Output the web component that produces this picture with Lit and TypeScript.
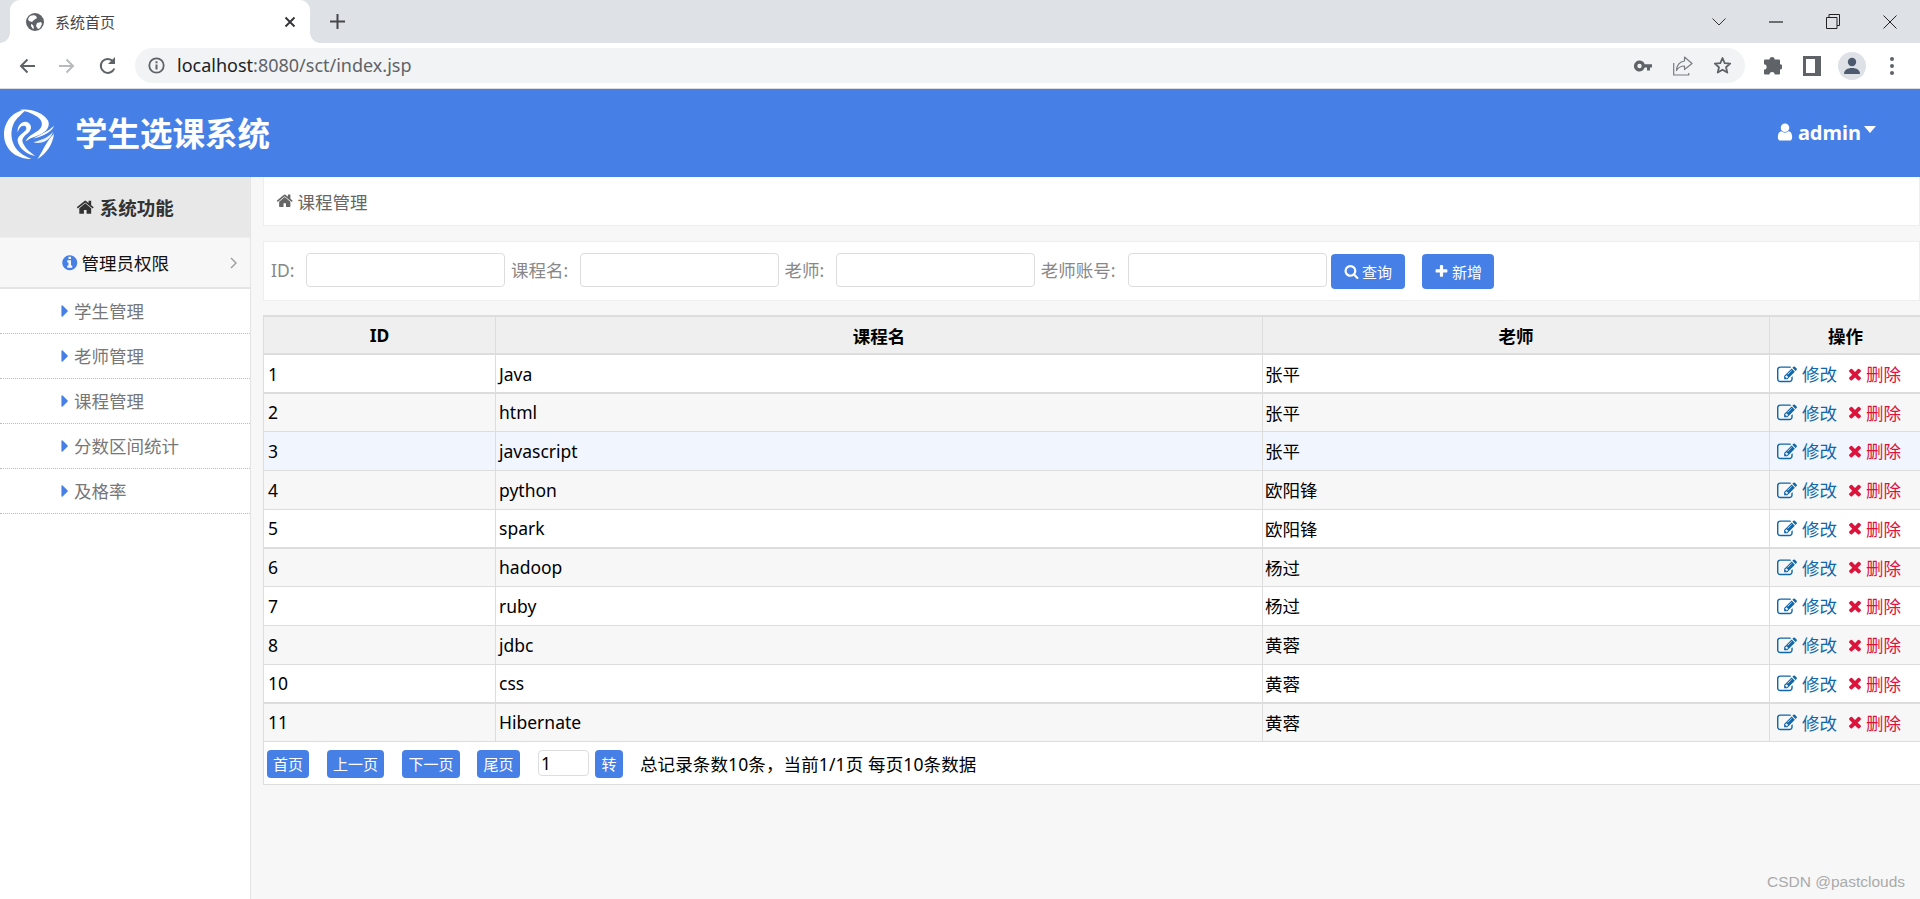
import { LitElement, html, css, svg } from "lit";
import { customElement } from "lit/decorators.js";

const P = {
  home: "M1472 992v480q0 26-19 45t-45 19h-384v-384h-256v384h-384q-26 0-45-19t-19-45v-480q0-1 .5-3t.5-3l575-474 575 474q1 2 1 6zm223-69l-62 74q-8 9-21 11h-3q-13 0-21-7l-692-577-692 577q-12 8-24 7-13-2-21-11l-62-74q-8-10-7-23.5t11-21.5l719-599q32-26 76-26t76 26l244 204v-195q0-14 9-23t23-9h192q14 0 23 9t9 23v408l219 182q10 8 11 21.5t-7 23.5z",
  user: "M1536 1399q0 109-62.5 187t-150.5 78h-854q-88 0-150.5-78t-62.5-187q0-85 8.5-160.5t31.5-152 58.5-131 94-89 134.5-34.5q131 128 313 128t313-128q76 0 134.5 34.5t94 89 58.5 131 31.5 152 8.5 160.5zm-256-887q0 159-112.5 271.5t-271.5 112.5-271.5-112.5-112.5-271.5 112.5-271.5 271.5-112.5 271.5 112.5 112.5 271.5z",
  info: "M1152 1376v-160q0-14-9-23t-23-9h-96v-512q0-14-9-23t-23-9h-320q-14 0-23 9t-9 23v160q0 14 9 23t23 9h96v320h-96q-14 0-23 9t-9 23v160q0 14 9 23t23 9h448q14 0 23-9t9-23zm-128-896v-160q0-14-9-23t-23-9h-192q-14 0-23 9t-9 23v160q0 14 9 23t23 9h192q14 0 23-9t9-23zm640 416q0 209-103 385.5t-279.5 279.5-385.5 103-385.5-103-279.5-279.5-103-385.5 103-385.5 279.5-279.5 385.5-103 385.5 103 279.5 279.5 103 385.5z",
  caret: "M1152 896q0 26-19 45l-448 448q-19 19-45 19t-45-19-19-45v-896q0-26 19-45t45-19 45 19l448 448q19 19 19 45z",
  search: "M1216 832q0-185-131.5-316.5t-316.5-131.5-316.5 131.5-131.5 316.5 131.5 316.5 316.5 131.5 316.5-131.5 131.5-316.5zm512 832q0 52-38 90t-90 38q-54 0-90-38l-343-342q-179 124-399 124-143 0-273.5-55.5t-225-150-150-225-55.5-273.5 55.5-273.5 150-225 225-150 273.5-55.5 273.5 55.5 225 150 150 225 55.5 273.5q0 220-124 399l343 343q37 37 37 90z",
  plus: "M1600 736v192q0 40-28 68t-68 28h-416v416q0 40-28 68t-68 28h-192q-40 0-68-28t-28-68v-416h-416q-40 0-68-28t-28-68v-192q0-40 28-68t68-28h416v-416q0-40 28-68t68-28h192q40 0 68 28t28 68v416h416q40 0 68 28t28 68z",
  times: "M1490 1322q0 40-28 68l-136 136q-28 28-68 28t-68-28l-294-294-294 294q-28 28-68 28t-68-28l-136-136q-28-28-28-68t28-68l294-294-294-294q-28-28-28-68t28-68l136-136q28-28 68-28t68 28l294 294 294-294q28-28 68-28t68 28l136 136q28 28 28 68t-28 68l-294 294 294 294q28 28 28 68z",
  edit: "M888 1184l116-116-152-152-116 116v56h96v96h56zm440-720q-16-16-33 1l-350 350q-17 17-1 33t33-1l350-350q17-17 1-33zm80 594v190q0 119-84.5 203.5t-203.5 84.5h-832q-119 0-203.5-84.5t-84.5-203.5v-832q0-119 84.5-203.5t203.5-84.5h832q63 0 117 25 15 7 18 23 3 17-9 29l-49 49q-14 14-32 8-23-6-45-6h-832q-66 0-113 47t-47 113v832q0 66 47 113t113 47h832q66 0 113-47t47-113v-126q0-13 9-22l64-64q15-15 35-7t20 29zm-96-738l288 288-672 672h-288v-288zm444 132l-92 92-288-288 92-92q28-28 68-28t68 28l152 152q28 28 28 68t-28 68z",
};

const fa = (d: string, extra = "") =>
  html`<svg class="fa ${extra}" viewBox="0 0 1792 1792"><path d=${d} fill="currentColor"></path></svg>`;

const ROWS: [string, string, string, number][] = [
  ["1", "Java", "张平", 39],
  ["2", "html", "张平", 38],
  ["3", "javascript", "张平", 39],
  ["4", "python", "欧阳锋", 39],
  ["5", "spark", "欧阳锋", 39],
  ["6", "hadoop", "杨过", 38],
  ["7", "ruby", "杨过", 39],
  ["8", "jdbc", "黄蓉", 39],
  ["10", "css", "黄蓉", 39],
  ["11", "Hibernate", "黄蓉", 38],
];
const THICK = [0, 4, 8];

const NAV = ["学生管理", "老师管理", "课程管理", "分数区间统计", "及格率"];

@customElement("app-root")
export class AppRoot extends LitElement {
  static styles = css`
    :host { display: flex; flex-direction: column; height: 899px; overflow: hidden; position: relative;
      background: #f7f7f7; font-family: "Noto Sans", "Noto Sans CJK SC", sans-serif; font-size: 17.5px; color: #000; }
    .fa { width: 1em; height: 1em; flex: none; display: block; }

    .tabstrip { height: 43px; background: #dee1e6; display: flex; align-items: stretch; padding-left: 10px; flex: none; }
    .tab { position: relative; width: 300px; background: #fff; border-radius: 10px 10px 0 0; display: flex; align-items: center;
      padding: 0 14px 0 16px; box-sizing: border-box; gap: 11px; font-size: 15px; color: #45474a; }
    .tab::before, .tab::after { content: ""; position: absolute; bottom: 0; width: 10px; height: 10px; }
    .tab::before { left: -10px; background: radial-gradient(circle at 0 0, #dee1e6 9.5px, #fff 10px); }
    .tab::after { right: -10px; background: radial-gradient(circle at 100% 0, #dee1e6 9.5px, #fff 10px); }
    .tab-title { flex: 1; }
    .plus { margin-left: 15px; width: 24px; display: flex; align-items: center; justify-content: center; }
    .winbtns { margin-left: auto; display: flex; align-items: center; padding-right: 1.5px; }
    .winbtn { width: 57px; height: 36px; display: flex; align-items: center; justify-content: center; }

    .toolbar { height: 45px; background: #fff; border-bottom: 1px solid #dadce0; display: flex; align-items: center; padding-left: 7px; flex: none; }
    .tbtn { width: 40px; height: 35px; display: flex; align-items: center; justify-content: center; flex: none; }
    .reload { padding-left: 1px; box-sizing: border-box; }
    .omni { margin-left: 8px; width: 1610px; height: 35px; border-radius: 18px; background: #f1f3f4; display: flex; align-items: center;
      padding-left: 13px; box-sizing: border-box; }
    .url { font-size: 18px; margin-left: 12px; color: #5f6368; flex: 1; line-height: 35px; }
    .url b { font-weight: 400; color: #202124; }
    .omni-end { display: flex; align-items: center; gap: 0; padding-right: 3px; }
    .oi { width: 39.5px; display: flex; justify-content: center; align-items: center; }
    .tools { margin-left: 7px; display: flex; }
    .avatar { width: 28px; height: 28px; border-radius: 50%; background: #dee1e6; display: flex; align-items: center; justify-content: center; }

    .header { height: 88px; background: #4680e6; color: #fff; display: flex; align-items: center; flex: none; padding: 0 44px 0 4px; }
    .logo { width: 51px; height: 51px; flex: none; margin-top: 2px; }
    .title { font-size: 32.5px; font-weight: 700; margin-left: 20px; font-family: "Noto Sans CJK SC", sans-serif; line-height: 1; margin-bottom: 2px; }
    .user { margin-left: auto; display: flex; align-items: center; font-size: 20px; font-weight: 700; gap: 3px; margin-bottom: 2px; }
    .user .fa { width: 20px; height: 20px; margin-left: -1px; }
    .caret { width: 0; height: 0; border-left: 6px solid transparent; border-right: 6px solid transparent; border-top: 7px solid #fff; margin-bottom: 6px; }

    .body { flex: 1; display: flex; min-height: 0; }
    .side { width: 251px; flex: none; background: #fff; border-right: 1px solid #e4e4e4; box-sizing: border-box; }
    .side-head { height: 60px; background: #e8e8e8; display: flex; align-items: center; justify-content: center; gap: 5px; font-size: 18.5px; font-weight: 700; color: #333; border-bottom: 1px solid #eee; box-sizing: content-box; }
    .side-group { height: 49px; background: #f7f7f7; border-bottom: 2px solid #e4e4e4; display: flex; align-items: center; padding: 0 12px 0 61px; gap: 3px; color: #111; box-sizing: content-box; }
    .side-group .info { color: #4680e6; }
    .side-group .lbl { flex: 1; }
    .nav { height: 44px; border-bottom: 1px dotted #bbb; display: flex; align-items: center; padding-left: 55px; color: #777; box-sizing: content-box; }
    .nav .fa { color: #4680e6; width: 20px; height: 20px; margin-right: -1px; }
    .nav span { margin-bottom: 2px; }

    .main { flex: 1; min-width: 0; padding-left: 12px; box-sizing: border-box; }
    .crumb { height: 49px; background: #fff; border: 1px solid #eee; border-top: 0; box-sizing: border-box; display: flex; align-items: center; padding-left: 12px; gap: 4px; color: #666; }
    .search { margin-top: 15px; height: 60px; background: #fff; border: 1px solid #eee; box-sizing: border-box; display: flex; align-items: center; padding: 0 0 3px 7px; color: #888; }
    .search input { height: 34px; width: 199px; box-sizing: border-box; border: 1px solid #ddd; border-radius: 4px; background: #fff; margin: 0 5.5px 0 12px; padding: 0; }
    .btn { background: #4680e6; color: #fff; border-radius: 4px; font-size: 15px; display: inline-flex; align-items: center; justify-content: center; gap: 3px; white-space: nowrap; box-sizing: border-box; }
    .search .btn { height: 35px; margin-top: 3px; }
    .search .fa { width: 15px; height: 15px; }

    table { margin-top: 14px; width: 1658px; table-layout: fixed; border-collapse: collapse; background: #fff; }
    th, td { border: 1px solid #ddd; padding: 0; box-sizing: border-box; }
    th { height: 38px; background: #efefef; font-weight: 700; text-align: center; border-width: 2px 1px; }
    td { padding-left: 4px; text-align: left; }
    td.name { padding-left: 3px; }
    td.nar { padding-left: 2px; }
    tr.alt td { background: #f7f7f7; }
    tr.hov td { background: #f1f5fd; }
    tr.thick td { border-bottom-width: 2px; }
    td.opcell { padding: 0; }
    .acts { display: flex; align-items: center; padding-left: 7px; }
    .e { color: #1267a8; display: flex; align-items: center; gap: 5px; }
    .e .fa { width: 20px; height: 20px; transform: translateY(1px); }
    .x { color: #dc143c; display: flex; align-items: center; gap: 2px; margin-left: 9px; }
    .x .fa { width: 18px; height: 18px; }

    .pager { height: 43px; width: 1658px; background: #fff; border: 1px solid #ddd; border-top: 0; box-sizing: border-box; display: flex; align-items: flex-start; padding: 8px 0 0 3px; }
    .pager .btn { height: 28px; flex: none; }
    .pager input { width: 51px; height: 26px; box-sizing: border-box; border: 1px solid #ddd; border-radius: 4px; margin: 0 6px 0 0; padding: 0 0 0 2px; font: inherit; color: #000; background: #fff; }
    .info-text { margin-left: 17px; line-height: 28px; white-space: nowrap; letter-spacing: 0.12px; }

    .mark { position: absolute; right: 15px; bottom: 8px; font: 15.5px "Liberation Sans", sans-serif; color: #aaa; }
  `;

  logo() {
    return html`<svg class="logo" viewBox="0 0 52 52" fill="#fff">
      <path d="M22 1C9 2 0 13 0 26c0 14 11 25 28 25-8-3-16-8-19-17-3-9-1-19 5-25 3-3 6-6 8-8z"></path>
      <path d="M16 1c10-2 24 2 29 11 3 8-5 14-13 16-4 1-7 3-10 5 3-6 9-8 13-11 5-4 5-10-1-14-6-4-12-6-18-7z"></path>
      <path d="M14 24c-1-8 6-13 11-10 4 3 3 8-1 11-4 3-7 6-4 11 3 6 8 9 12 12-8-1-17-8-18-15-1-5 5-8 8-11 2-3 0-5-2-5-3 0-5 3-6 7z"></path>
      <path d="M51 17c-2 7-13 11-21 13 7-4 15-7 21-13z"></path>
      <path d="M50 23c-3 5-10 8-20 11 3 1 8 1 12-1 4-2 7-6 8-10z" opacity=".9"></path>
      <path d="M51 25c-1 11-8 21-17 26 5-7 8-15 12-20 2-3 4-4 5-6z"></path>
    </svg>`;
  }

  chrome() {
    const stroke = (d: string, c = "#45474a", w = 2) => svg`<path d=${d} fill="none" stroke=${c} stroke-width=${w}></path>`;
    return html`
      <div class="tabstrip">
        <div class="tab">
          <svg width="18" height="18" viewBox="0 0 18 18"><circle cx="9" cy="9" r="9" fill="#5f6368"></circle><path d="M4 3c2-1 5-1 6 0l1 2-3 2-2 2-3-1-1-2zM11 10l4-1 1 2-2 4-2 1-2-3zM5 11l2 1 1 3-1 1-2-3z" fill="#fff"></path></svg>
          <span class="tab-title">系统首页</span>
          <svg width="12" height="12" viewBox="0 0 12 12">${stroke("M1.5 1.5l9 9M10.5 1.5l-9 9", "#303134", 1.8)}</svg>
        </div>
        <div class="plus"><svg width="15" height="15" viewBox="0 0 15 15">${stroke("M7.5 0v15M0 7.5h15", "#45474a", 2)}</svg></div>
        <div class="winbtns">
          <div class="winbtn"><svg width="14" height="8" viewBox="0 0 14 8">${stroke("M.5.5L7 7l6.5-6.5", "#333", 1)}</svg></div>
          <div class="winbtn"><svg width="14" height="2" viewBox="0 0 14 2">${stroke("M0 1h14", "#222", 1.2)}</svg></div>
          <div class="winbtn"><svg width="14" height="15" viewBox="0 0 14 15">${stroke("M.5 3.5h10.5v11H.5zM3 3.5V.5h10.5v11H11", "#222", 1)}</svg></div>
          <div class="winbtn"><svg width="14" height="14" viewBox="0 0 14 14">${stroke("M.5.5l13 13M13.5.5l-13 13", "#222", 1)}</svg></div>
        </div>
      </div>
      <div class="toolbar">
        <div class="tbtn"><svg width="16" height="16" viewBox="0 0 16 16">${stroke("M16 8H2M8.5 1.5L2 8l6.5 6.5", "#5f6368", 2)}</svg></div>
        <div class="tbtn"><svg width="16" height="16" viewBox="0 0 16 16">${stroke("M0 8h14M7.5 1.5L14 8l-6.5 6.5", "#b8babc", 2)}</svg></div>
        <div class="tbtn reload"><svg width="18" height="18" viewBox="0 0 18 18">${stroke("M15.3 11.5A7 7 0 1 1 14 4.2", "#5f6368", 2)}<path d="M16 0v7H9z" fill="#5f6368"></path></svg></div>
        <div class="omni">
          <svg width="17" height="17" viewBox="0 0 17 17"><circle cx="8.5" cy="8.5" r="7.2" fill="none" stroke="#5f6368" stroke-width="1.8"></circle><path d="M7.5 7.5h2v5h-2zM7.5 4.2h2v2h-2z" fill="#5f6368"></path></svg>
          <div class="url"><b>localhost</b>:8080/sct/index.jsp</div>
          <div class="omni-end">
            <div class="oi"><svg width="18" height="12" viewBox="0 0 18 12"><path fill-rule="evenodd" d="M5.5 0.5a5.5 5.5 0 0 1 5.2 3.7H18v3.4h-2v3h-3v-3h-2.300A5.500 5.500 0 1 1 5.500.5zm0 3.300a2.200 2.200 0 1 0 0 4.400 2.200 2.200 0 0 0 0-4.400z" fill="#5f6368"></path></svg></div>
            <div class="oi"><svg width="20" height="20" viewBox="0 0 20 20">${stroke("M.7 7v12h15v-2", "#7a7d80", 1.2)}<path d="M11.500 1l7.500 6.500-7.500 6v-3.500c-3 0-6 1-8 4.500 0-5 3-9 8-9.500z" fill="none" stroke="#7a7d80" stroke-width="1.200" stroke-linejoin="round"></path></svg></div>
            <div class="oi"><svg width="19" height="19" viewBox="0 0 19 19"><path d="M9.500 2l2.200 5.100 5.500.5-4.200 3.600 1.300 5.400-4.800-2.900-4.800 2.900 1.300-5.400L1.800 7.600l5.500-.5z" fill="none" stroke="#5f6368" stroke-width="1.800" stroke-linejoin="round"></path></svg></div>
          </div>
        </div>
        <div class="tools">
          <div class="tbtn"><svg width="19" height="19" viewBox="0 0 19 19"><path d="M6.500 3.500a2.600 2.600 0 0 1 5.200 0H16a1 1 0 0 1 1 1v3.700a2.600 2.600 0 0 1 0 5.200V17.500a1 1 0 0 1-1 1h-4.300a2.600 2.600 0 0 0-5.200 0H2a1 1 0 0 1-1-1v-4a2.600 2.600 0 0 0 0-5.200V4.500a1 1 0 0 1 1-1z" fill="#5f6368"></path></svg></div>
          <div class="tbtn"><svg width="18" height="20" viewBox="0 0 18 20"><path fill-rule="evenodd" d="M0 0h18v20H0zM3 3v14h9V3z" fill="#5f6368"></path></svg></div>
          <div class="tbtn"><div class="avatar"><svg width="18" height="18" viewBox="0 0 18 18"><circle cx="9" cy="5" r="4.200" fill="#4d5a6f"></circle><path d="M1 17c0-4 3.500-6 8-6s8 2 8 6z" fill="#4d5a6f"></path></svg></div></div>
          <div class="tbtn"><svg width="4" height="18" viewBox="0 0 4 18"><circle cx="2" cy="2" r="2" fill="#5f6368"></circle><circle cx="2" cy="9" r="2" fill="#5f6368"></circle><circle cx="2" cy="16" r="2" fill="#5f6368"></circle></svg></div>
        </div>
      </div>`;
  }

  render() {
    return html`
      ${this.chrome()}
      <div class="header">
        ${this.logo()}
        <div class="title">学生选课系统</div>
        <div class="user">${fa(P.user)}<span>admin</span><span class="caret"></span></div>
      </div>
      <div class="body">
        <aside class="side">
          <div class="side-head">${fa(P.home)}<span>系统功能</span></div>
          <div class="side-group">${fa(P.info, "info")}<span class="lbl">管理员权限</span>
            <svg width="8" height="12" viewBox="0 0 8 12"><path d="M1 1l5 5-5 5" fill="none" stroke="#999" stroke-width="1.300"></path></svg></div>
          ${NAV.map((n) => html`<div class="nav">${fa(P.caret)}<span>${n}</span></div>`)}
        </aside>
        <main class="main">
          <div class="crumb">${fa(P.home)}<span>课程管理</span></div>
          <div class="search">
            <span>ID:</span><input />
            <span>课程名:</span><input />
            <span>老师:</span><input />
            <span>老师账号:</span><input />
            <span class="btn" style="width:74px;margin-left:-1px">${fa(P.search)}查询</span>
            <span class="btn" style="width:72px;margin-left:17px">${fa(P.plus)}新增</span>
          </div>
          <table>
            <colgroup><col style="width:232px" /><col style="width:767px" /><col style="width:507px" /><col style="width:152px" /></colgroup>
            <thead><tr><th>ID</th><th>课程名</th><th>老师</th><th>操作</th></tr></thead>
            <tbody>
              ${ROWS.map((r, i) => html`<tr class="${i === 2 ? "hov" : i % 2 ? "alt" : ""} ${THICK.includes(i) ? "thick" : ""}" style="height:${r[3]}px">
                <td>${r[0]}</td><td class="name">${r[1]}</td><td class="nar">${r[2]}</td>
                <td class="opcell"><div class="acts"><span class="e">${fa(P.edit)}修改</span><span class="x">${fa(P.times)}删除</span></div></td>
              </tr>`)}
            </tbody>
          </table>
          <div class="pager">
            <span class="btn" style="width:42px">首页</span>
            <span class="btn" style="width:57px;margin-left:18px">上一页</span>
            <span class="btn" style="width:58px;margin-left:18px">下一页</span>
            <span class="btn" style="width:43px;margin-left:17px">尾页</span>
            <input value="1" style="margin-left:18px" />
            <span class="btn" style="width:28px">转</span>
            <span class="info-text">总记录条数10条，当前1/1页 每页10条数据</span>
          </div>
        </main>
      </div>
      <div class="mark">CSDN @pastclouds</div>
    `;
  }
}
